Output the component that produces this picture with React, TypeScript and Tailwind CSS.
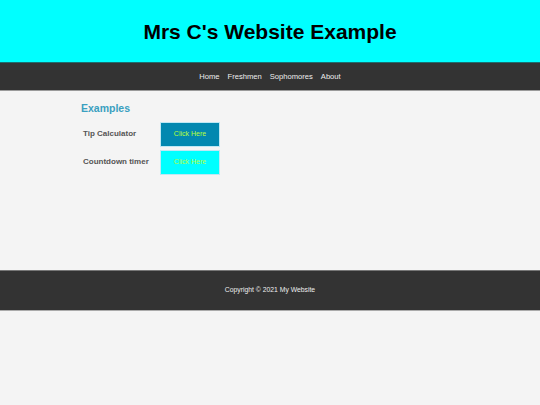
import React from "react";

const NAV_ITEMS = ["Home", "Freshmen", "Sophomores", "About"];

const EXAMPLES = [
  { label: "Tip Calculator", bg: "bg-[#0288b0]" },
  { label: "Countdown timer", bg: "bg-[#00ffff]" },
];

export default function App() {
  return (
    <div className="min-h-[405px] bg-[#f4f4f4] font-['Liberation_Sans',Arial,sans-serif]">
      {/* Header */}
      <header className="h-[62px] bg-[#00ffff] flex items-center justify-center">
        <h1 className="text-[21px] font-bold text-black leading-none">Mrs C's Website Example</h1>
      </header>

      {/* Nav */}
      <nav className="h-[29px] bg-[#333333] border-t border-t-[#1c6f6f] border-b border-b-[#9a9a9a] flex items-center justify-center gap-[8px]">
        {NAV_ITEMS.map((item) => (
          <a key={item} className="text-[7.6px] text-[#eeeeee]">
            {item}
          </a>
        ))}
      </nav>

      {/* Main */}
      <main className="h-[179px] px-[81px] pt-[12px]">
        <h2 className="text-[10.5px] font-bold text-[#3aa0c0] leading-none">Examples</h2>
        <div className="mt-[8px] flex flex-col gap-[3px]">
          {EXAMPLES.map((ex) => (
            <div key={ex.label} className="flex items-center">
              <span className="w-[79px] pl-[2px] text-[8px] font-bold text-[#555555]">{ex.label}</span>
              <button
                className={`w-[60px] h-[25px] ${ex.bg} border border-[#bfe8f4] text-[7px] text-[#b8ff3a]`}
              >
                Click Here
              </button>
            </div>
          ))}
        </div>
      </main>

      {/* Footer */}
      <footer className="h-[41px] bg-[#333333] border-t border-t-[#777777] border-b border-b-[#aaaaaa] flex items-center justify-center">
        <p className="text-[6.8px] text-[#eeeeee]">Copyright © 2021 My Website</p>
      </footer>
    </div>
  );
}
